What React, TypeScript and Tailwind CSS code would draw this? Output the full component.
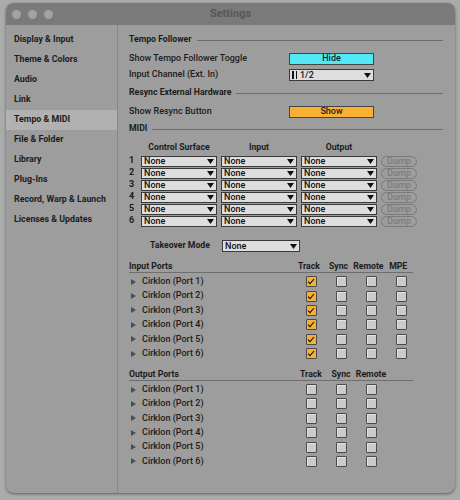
const font = "font-['Roboto','Liberation_Sans',Arial,sans-serif]";

const sidebarItems = [
  "Display & Input",
  "Theme & Colors",
  "Audio",
  "Link",
  "Tempo & MIDI",
  "File & Folder",
  "Library",
  "Plug-Ins",
  "Record, Warp & Launch",
  "Licenses & Updates",
];

const Caret = () => (
  <svg width="7" height="5" viewBox="0 0 7 5" className="shrink-0">
    <path d="M0 0h7L3.5 5z" fill="#111" />
  </svg>
);

const Dropdown = ({ label, className }: { label: React.ReactNode; className: string }) => (
  <div
    className={`flex h-[11px] items-center justify-between border border-[#3a3a3a] bg-[#dedede] pl-[2px] pr-[2px] leading-none text-[#111] ${className}`}
  >
    <span className="flex items-center">{label}</span>
    <Caret />
  </div>
);

const SectionHeader = ({ title }: { title: string }) => (
  <div className="flex h-[12px] items-center gap-[5px]">
    <span className="text-[8.7px] font-bold">{title}</span>
    <div className="h-px flex-1 bg-[#6e6e6e]" />
  </div>
);

const Check = ({ on }: { on?: boolean }) =>
  on ? (
    <div className="flex h-[11px] w-[11px] items-center justify-center rounded-[1px] border border-[#4a4a4a] bg-[#f7b034]">
      <svg width="8" height="7" viewBox="0 0 8 7">
        <path d="M1 3.6l2 2L7 1" stroke="#111" strokeWidth="1.1" fill="none" />
      </svg>
    </div>
  ) : (
    <div className="h-[11px] w-[11px] rounded-[1px] border border-[#4a4a4a] bg-[#cbcbcb] shadow-[inset_1px_1px_0_#e2e2e2]" />
  );

const Tri = () => (
  <svg width="5" height="6" viewBox="0 0 5 6" className="shrink-0">
    <path d="M0 0l5 3-5 3z" fill="#4d4d4d" />
  </svg>
);

const PortTable = ({ title, cols, checked }: { title: string; cols: string[]; checked: boolean[] }) => (
  <div className="flex flex-col">
    <div className="flex h-[13px] w-[284px] items-start border-b border-[#6e6e6e] text-[8.7px] font-bold">
      <span className="w-[167px]">{title}</span>
      {cols.map((c) => (
        <span key={c} className="flex w-[30px] justify-center whitespace-nowrap">
          {c}
        </span>
      ))}
    </div>
    <div className="mt-[1.5px] flex flex-col">
      {[1, 2, 3, 4, 5, 6].map((n) => (
        <div key={n} className="flex h-[14.4px] items-center">
          <div className="flex w-[167px] items-center gap-[6px] pl-[2px]">
            <Tri />
            <span>Cirklon (Port {n})</span>
          </div>
          {cols.map((c, i) => (
            <div key={c} className="flex w-[30px] justify-center">
              <Check on={i === 0 && checked[n - 1]} />
            </div>
          ))}
        </div>
      ))}
    </div>
  </div>
);

export default function App() {
  return (
    <div className={`h-[500px] w-[460px] overflow-hidden bg-[#ababab] pl-[6px] pr-[5px] pt-[3px] ${font}`}>
      <div className="flex h-[490px] flex-col overflow-hidden rounded-[8px] bg-[#9d9d9d] shadow-[0_1px_3px_rgba(0,0,0,0.45)]">
        {/* title bar */}
        <div className="relative flex h-[22px] shrink-0 items-center justify-center bg-[#7a7a7a]">
          <div className="absolute left-[6px] top-[7px] flex gap-[7px]">
            <div className="h-[9px] w-[9px] rounded-full bg-[#a2a2a2]" />
            <div className="h-[9px] w-[9px] rounded-full bg-[#a2a2a2]" />
            <div className="h-[9px] w-[9px] rounded-full bg-[#a2a2a2]" />
          </div>
          <span className="text-[11px] font-bold text-[#575757]">Settings</span>
        </div>

        <div className="flex flex-1">
          {/* sidebar */}
          <div className="flex w-[112px] shrink-0 flex-col border-r border-[#878787] pt-[5px] text-[8.8px] font-bold text-[#1c1c1c]">
            {sidebarItems.map((s) => (
              <div
                key={s}
                className={`flex h-[20px] items-center pl-[8px] ${s === "Tempo & MIDI" ? "bg-[#b1b1b1]" : ""}`}
              >
                {s}
              </div>
            ))}
          </div>

          {/* content */}
          <div className="flex flex-1 flex-col pl-[11px] pr-[12px] pt-[9px] text-[9px] font-medium text-[#1c1c1c]">
            <SectionHeader title="Tempo Follower" />
            <div className="mt-[5px] flex h-[16px] items-center">
              <span className="w-[160px]">Show Tempo Follower Toggle</span>
              <div className="flex h-[12px] w-[85px] items-center justify-center border border-[#444] bg-[#52e8f6]">
                Hide
              </div>
            </div>
            <div className="flex h-[16px] items-center">
              <span className="w-[160px]">Input Channel (Ext. In)</span>
              <Dropdown
                className="h-[12px] w-[85px]"
                label={
                  <>
                    <span className="mr-[2px] inline-block h-[8px] w-[1.5px] bg-[#111]" />
                    <span className="mr-[3px] inline-block h-[8px] w-[1.5px] bg-[#111]" />
                    1/2
                  </>
                }
              />
            </div>
            <div className="mt-[4px]">
              <SectionHeader title="Resync External Hardware" />
            </div>
            <div className="mt-[5px] flex h-[16px] items-center">
              <span className="w-[160px]">Show Resync Button</span>
              <div className="flex h-[12px] w-[85px] items-center justify-center border border-[#444] bg-[#f8b134]">
                Show
              </div>
            </div>
            <div className="mt-[3px]">
              <SectionHeader title="MIDI" />
            </div>

            {/* control surfaces */}
            <div className="mt-[7px] flex h-[12px] items-center gap-[4px] pl-[12px] text-[8.7px] font-bold">
              <span className="w-[76px] text-center">Control Surface</span>
              <span className="w-[76px] text-center">Input</span>
              <span className="w-[76px] text-center">Output</span>
            </div>
            <div className="mt-[1px] flex flex-col">
              {[1, 2, 3, 4, 5, 6].map((n) => (
                <div key={n} className="flex h-[12px] items-center gap-[4px]">
                  <span className="w-[8px] font-bold">{n}</span>
                  <Dropdown className="w-[76px]" label="None" />
                  <Dropdown className="w-[76px]" label="None" />
                  <Dropdown className="w-[76px]" label="None" />
                  <div className="flex h-[11px] w-[36px] items-center justify-center rounded-full border border-[#7a7a7a] leading-none text-[#7d7d7d]">
                    Dump
                  </div>
                </div>
              ))}
            </div>

            <div className="mt-[12px] flex h-[14px] items-center pl-[21px]">
              <span className="w-[72px] text-[8.7px] font-bold">Takeover Mode</span>
              <Dropdown className="h-[12px] w-[78px]" label="None" />
            </div>

            <div className="mt-[7px]">
              <PortTable
                title="Input Ports"
                cols={["Track", "Sync", "Remote", "MPE"]}
                checked={[true, true, true, true, true, true]}
              />
            </div>
            <div className="mt-[7px]">
              <PortTable
                title="Output Ports"
                cols={["Track", "Sync", "Remote"]}
                checked={[false, false, false, false, false, false]}
              />
            </div>
          </div>
        </div>
      </div>
    </div>
  );
}
